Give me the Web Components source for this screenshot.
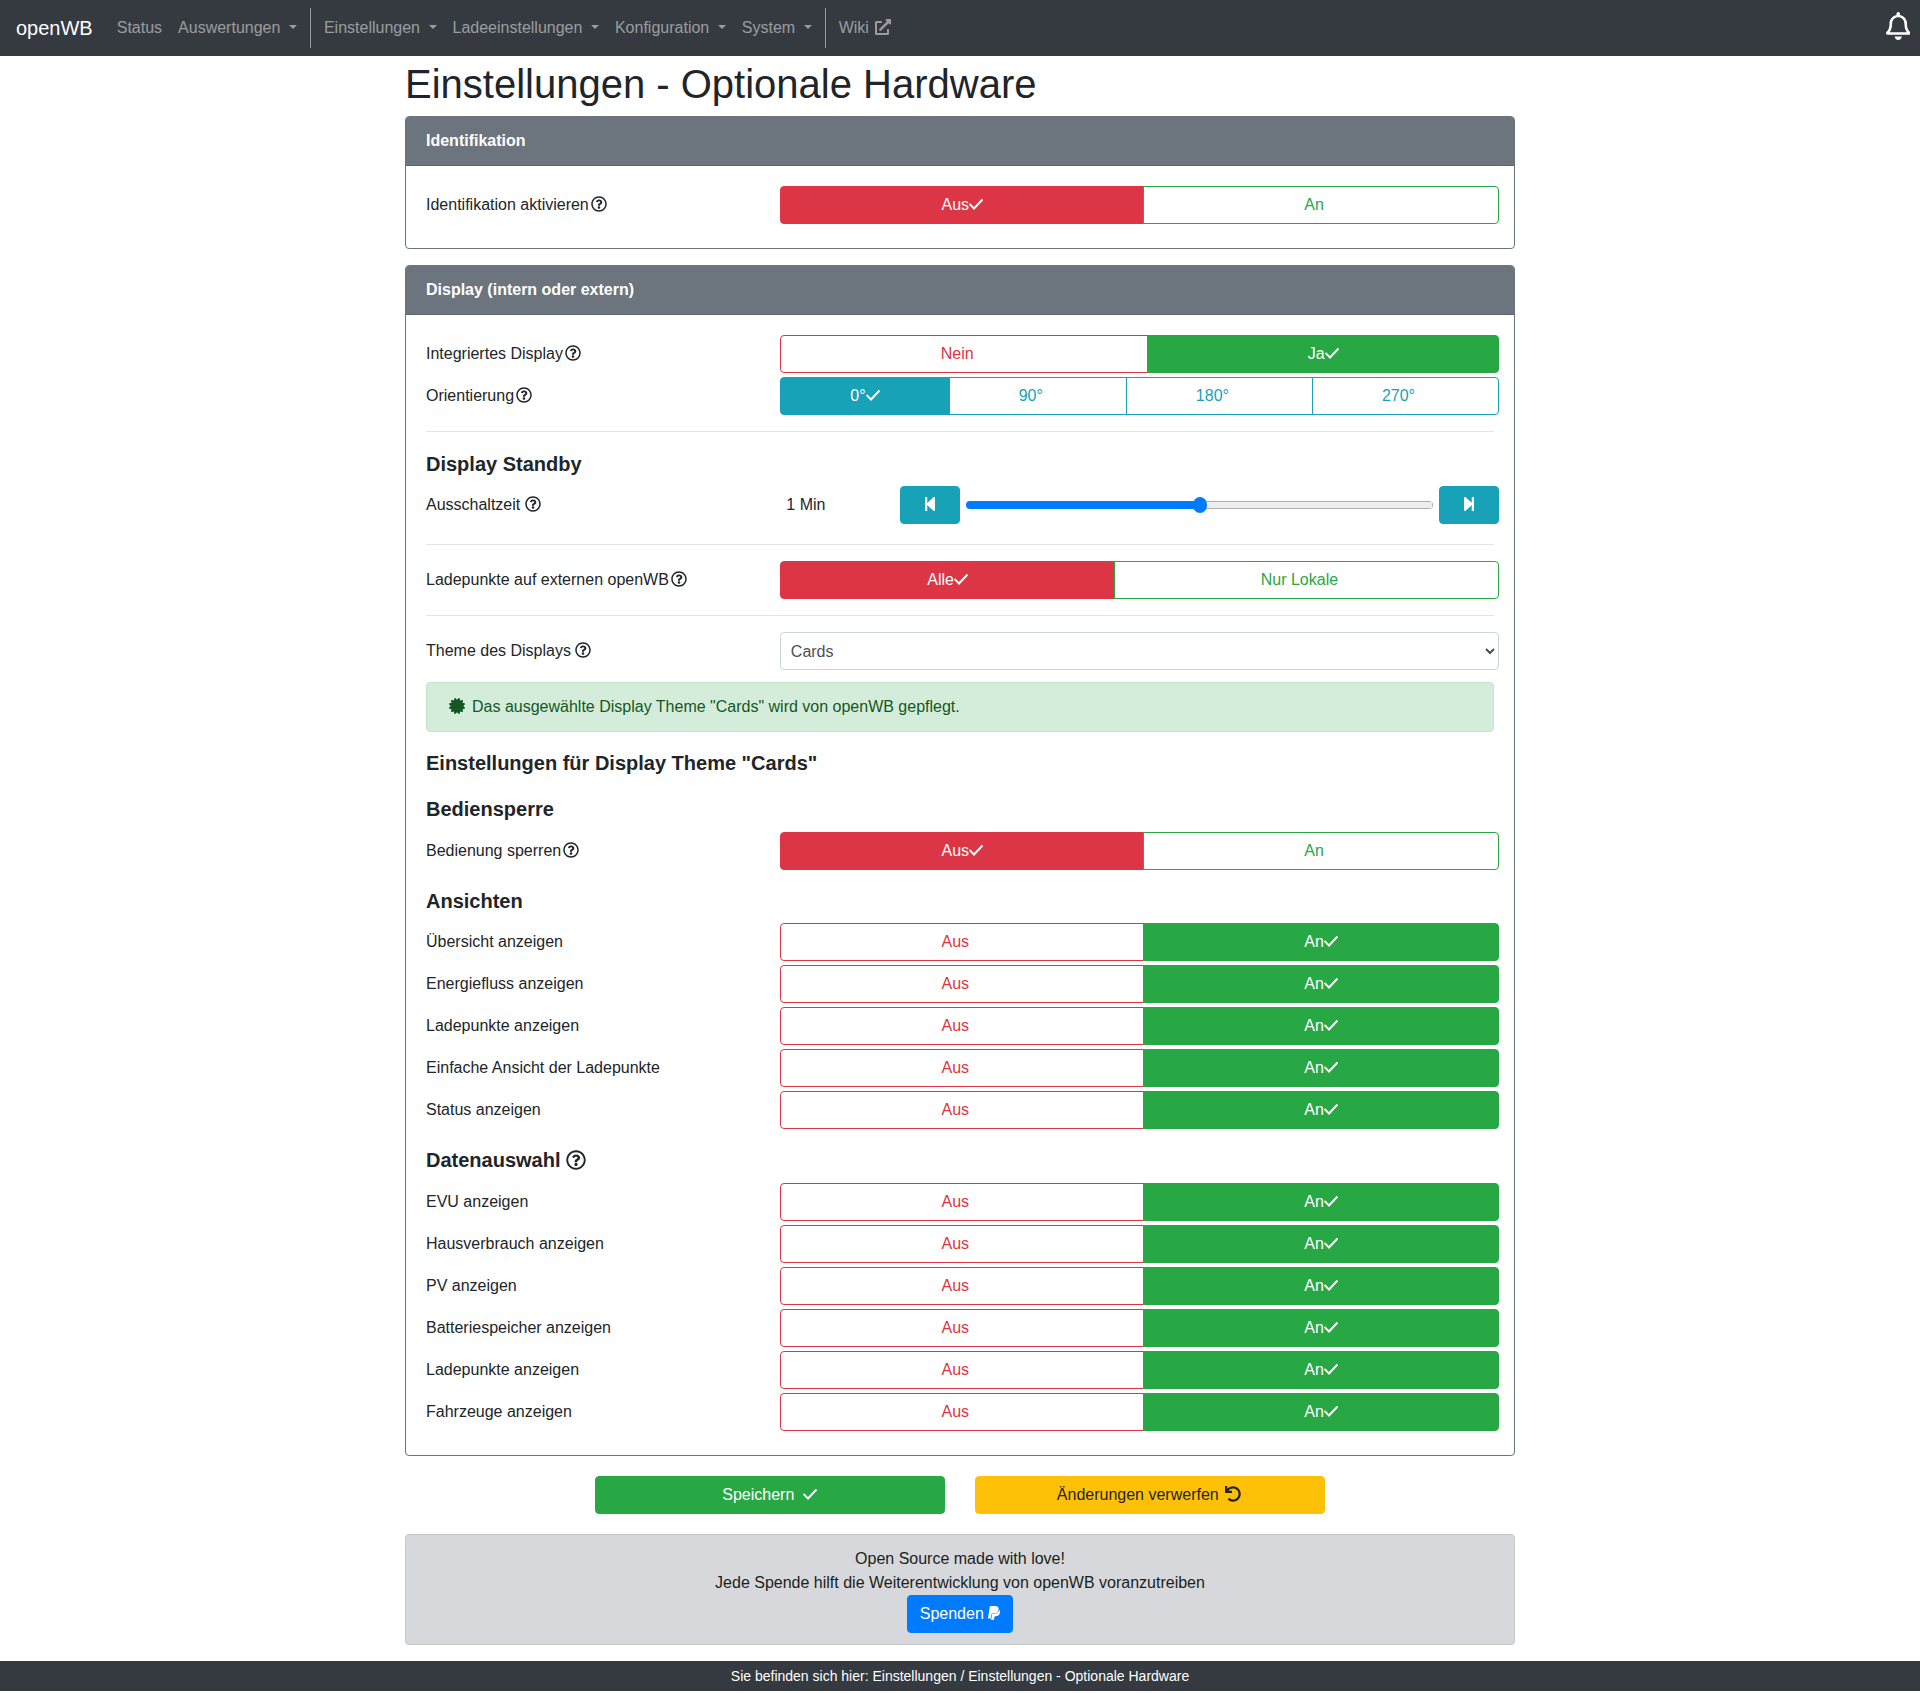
<!DOCTYPE html>
<html lang="de">
<head>
<meta charset="utf-8">
<title>openWB</title>
<style>
html,body{margin:0;padding:0;background:#fff}
body{font:16px/1.5 "Liberation Sans",Arial,sans-serif;color:#212529}
</style>
</head>
<body>
<ob-navbar>
  <ob-nav-item>Status</ob-nav-item>
  <ob-nav-item dropdown>Auswertungen</ob-nav-item>
  <ob-nav-divider></ob-nav-divider>
  <ob-nav-item dropdown>Einstellungen</ob-nav-item>
  <ob-nav-item dropdown>Ladeeinstellungen</ob-nav-item>
  <ob-nav-item dropdown>Konfiguration</ob-nav-item>
  <ob-nav-item dropdown>System</ob-nav-item>
  <ob-nav-divider></ob-nav-divider>
  <ob-nav-item external>Wiki</ob-nav-item>
</ob-navbar>

<ob-container>
  <ob-title>Einstellungen - Optionale Hardware</ob-title>

  <ob-card header="Identifikation">
    <ob-row><ob-label slot="label" help="tight">Identifikation aktivieren</ob-label>
      <ob-btn-group><ob-btn color="danger" active>Aus</ob-btn><ob-btn color="success">An</ob-btn></ob-btn-group></ob-row>
  </ob-card>

  <ob-card header="Display (intern oder extern)">
    <ob-row><ob-label slot="label" help="tight">Integriertes Display</ob-label>
      <ob-btn-group><ob-btn color="danger">Nein</ob-btn><ob-btn color="success" active>Ja</ob-btn></ob-btn-group></ob-row>
    <ob-row><ob-label slot="label" help="tight">Orientierung</ob-label>
      <ob-btn-group><ob-btn color="info" active>0°</ob-btn><ob-btn color="info">90°</ob-btn><ob-btn color="info">180°</ob-btn><ob-btn color="info">270°</ob-btn></ob-btn-group></ob-row>
    <ob-rule></ob-rule>
    <ob-heading style="margin-top:20px;margin-bottom:10px">Display Standby</ob-heading>
    <ob-row><ob-label slot="label" help="space">Ausschaltzeit</ob-label>
      <ob-slider value="50">1 Min</ob-slider></ob-row>
    <ob-rule style="margin-top:20px"></ob-rule>
    <ob-row><ob-label slot="label" help="tight">Ladepunkte auf externen openWB</ob-label>
      <ob-btn-group><ob-btn color="danger" active>Alle</ob-btn><ob-btn color="success">Nur Lokale</ob-btn></ob-btn-group></ob-row>
    <ob-rule></ob-rule>
    <ob-row style="margin-bottom:12px"><ob-label slot="label" help="space">Theme des Displays</ob-label>
      <ob-select value="Cards"></ob-select></ob-row>
    <ob-alert>Das ausgewählte Display Theme "Cards" wird von openWB gepflegt.</ob-alert>
    <ob-heading style="margin-top:19px;margin-bottom:22px">Einstellungen für Display Theme "Cards"</ob-heading>
    <ob-heading style="margin-bottom:11px">Bediensperre</ob-heading>
    <ob-row><ob-label slot="label" help="tight">Bedienung sperren</ob-label>
      <ob-btn-group><ob-btn color="danger" active>Aus</ob-btn><ob-btn color="success">An</ob-btn></ob-btn-group></ob-row>
    <ob-heading style="margin-top:19px;margin-bottom:10px">Ansichten</ob-heading>
    <ob-onoff>Übersicht anzeigen</ob-onoff>
    <ob-onoff>Energiefluss anzeigen</ob-onoff>
    <ob-onoff>Ladepunkte anzeigen</ob-onoff>
    <ob-onoff>Einfache Ansicht der Ladepunkte</ob-onoff>
    <ob-onoff>Status anzeigen</ob-onoff>
    <ob-heading help style="margin-top:19px;margin-bottom:11px">Datenauswahl</ob-heading>
    <ob-onoff>EVU anzeigen</ob-onoff>
    <ob-onoff>Hausverbrauch anzeigen</ob-onoff>
    <ob-onoff>PV anzeigen</ob-onoff>
    <ob-onoff>Batteriespeicher anzeigen</ob-onoff>
    <ob-onoff>Ladepunkte anzeigen</ob-onoff>
    <ob-onoff>Fahrzeuge anzeigen</ob-onoff>
  </ob-card>

  <ob-actions>
    <ob-action color="success" icon="check">Speichern</ob-action>
    <ob-action color="warning" icon="undo">Änderungen verwerfen</ob-action>
  </ob-actions>

  <ob-donate>
    <div>Open Source made with love!</div>
    <div>Jede Spende hilft die Weiterentwicklung von openWB voranzutreiben</div>
  </ob-donate>
</ob-container>

<ob-footer>Sie befinden sich hier: Einstellungen / Einstellungen - Optionale Hardware</ob-footer>

<script>
const ICONS = {
  help:[512,'<path d="M256 8C119 8 8 119.1 8 256c0 137 111 248 248 248s248-111 248-248C504 119.1 393 8 256 8zm0 448c-110.5 0-200-89.5-200-200 0-110.4 89.5-200 200-200 110.5 0 200 89.6 200 200 0 110.5-89.5 200-200 200zm107.2-255.2c0 67.1-72.4 68.1-72.4 92.9V300c0 6.6-5.4 12-12 12h-45.6c-6.6 0-12-5.4-12-12v-8.7c0-35.7 27.1-50 47.6-61.4 17.5-9.8 28.3-16.5 28.3-29.5 0-17.2-21.9-28.6-39.7-28.6-23.1 0-33.8 11-48.8 29.9-4 5.1-11.4 6-16.6 2.1l-27.8-21.1c-5.1-3.9-6.3-11.1-2.7-16.4C184.8 131.5 214.9 112 261.8 112c49.1 0 101.4 38.3 101.4 88.8zM298 368c0 23.2-18.8 42-42 42s-42-18.8-42-42 18.8-42 42-42 42 18.8 42 42z"/>'],
  check:[448,'<path fill="none" stroke="currentColor" stroke-width="62" d="M16 256 L160 400 L432 112"/>'],
  bell:[448,'<path d="M439.39 362.29c-19.32-20.76-55.47-51.99-55.47-154.29 0-77.7-54.48-139.9-127.94-155.16V32c0-17.67-14.32-32-31.98-32s-31.98 14.33-31.98 32v20.84C118.56 68.1 64.08 130.3 64.08 208c0 102.3-36.15 133.53-55.47 154.29-6 6.45-8.66 14.16-8.61 21.71.11 16.4 12.98 32 32.1 32h383.8c19.12 0 32-15.6 32.1-32 .05-7.55-2.61-15.27-8.61-21.71zM67.53 368c21.22-27.97 44.42-74.33 44.53-159.42 0-.2-.06-.38-.06-.58 0-61.86 50.14-112 112-112s112 50.14 112 112c0 .2-.06.38-.06.58.11 85.1 23.31 131.46 44.53 159.42H67.53zM224 512c35.32 0 63.97-28.65 63.97-64H160.03c0 35.35 28.65 64 63.97 64z"/>'],
  certificate:[512,'<path d="M458.622 255.92l45.985-45.005c13.708-12.977 7.316-36.039-10.664-40.339l-62.65-15.99 17.661-62.015c4.991-17.838-11.829-34.663-29.661-29.671l-61.994 17.667-15.984-62.671C337.085.197 313.765-6.276 300.99 7.228L256 53.57 211.011 7.229c-12.63-13.351-36.047-7.234-40.325 10.668l-15.984 62.671-61.995-17.667C74.87 57.907 58.056 74.738 63.046 92.572l17.661 62.015-62.65 15.99C.069 174.878-6.31 197.944 7.392 210.915l45.985 45.005-45.985 45.004c-13.708 12.977-7.316 36.039 10.664 40.339l62.65 15.99-17.661 62.015c-4.991 17.838 11.829 34.663 29.661 29.671l61.994-17.667 15.984 62.671c4.439 18.575 27.696 24.018 40.325 10.668L256 458.61l44.989 46.001c12.5 13.488 35.987 7.486 40.325-10.668l15.984-62.671 61.994 17.667c17.831 4.992 34.653-11.833 29.661-29.671l-17.661-62.015 62.65-15.99c17.981-4.3 24.372-27.362 10.664-40.339l-45.984-45.004z"/>'],
  back:[448,'<path d="M64 468V44c0-6.6 5.4-12 12-12h48c6.6 0 12 5.4 12 12v176.4l195.5-181C352.1 22.3 384 36.6 384 64v384c0 27.4-31.9 41.7-52.5 24.6L136 292.7V468c0 6.6-5.4 12-12 12H76c-6.6 0-12-5.4-12-12z"/>'],
  forward:[448,'<path d="M384 44v424c0 6.6-5.4 12-12 12h-48c-6.6 0-12-5.4-12-12V291.6l-195.5 181C95.9 489.7 64 475.4 64 448V64c0-27.4 31.9-41.7 52.5-24.6L312 219.3V44c0-6.6 5.4-12 12-12h48c6.6 0 12 5.4 12 12z"/>'],
  undo:[512,'<path d="M212.333 224.333H12c-6.627 0-12-5.373-12-12V12C0 5.373 5.373 0 12 0h48c6.627 0 12 5.373 12 12v78.112C117.773 39.279 184.26 7.47 258.175 8.007c136.906.994 246.448 111.623 246.157 248.532C504.041 393.258 393.12 504 256.333 504c-64.089 0-122.496-24.313-166.51-64.215-5.099-4.622-5.334-12.554-.467-17.42l33.967-33.967c4.474-4.474 11.662-4.717 16.401-.525C170.76 415.336 211.58 432 256.333 432c97.268 0 176-78.716 176-176 0-97.267-78.716-176-176-176-58.496 0-110.28 28.476-142.274 72.333h98.274c6.627 0 12 5.373 12 12v48c0 6.627-5.373 12-12 12z"/>'],
  paypal:[384,'<path d="M111.4 295.9c-3.5 19.2-17.4 108.7-21.5 134-.3 1.8-1 2.5-3 2.5H12.3c-7.6 0-13.1-6.6-12.1-13.9L58.8 46.6C60.3 37 68.8 29.7 78.7 29.7c152.3 0 165.1-3.7 204 11.4 60.1 23.3 65.6 79.5 44 140.3-21.5 62.6-72.5 89.5-140.1 90.3-43.4.7-69.5-7-75.2 24.2zM357.1 152c-1.8-1.3-2.5-1.8-3 1.3-2 11.4-5.1 22.5-8.8 33.6-39.9 113.8-150.5 103.9-204.5 103.9-6.1 0-10.1 3.3-10.9 9.4-22.6 140.4-27.1 169.7-27.1 169.7-1 7.1 3.5 12.9 10.6 12.9h63.5c8.6 0 15.7-6.3 17.4-14.9.7-5.4-1.1 6.1 14.4-91.3 4.6-22 14.3-19.7 29.3-19.7 71 0 126.4-28.8 142.9-112.3 6.5-34.8 4.6-71.4-23.8-92.6z"/>'],
  external:[512,'<path d="M432 320h-32a16 16 0 0 0-16 16v112H64V128h144a16 16 0 0 0 16-16V80a16 16 0 0 0-16-16H48A48 48 0 0 0 0 112v352a48 48 0 0 0 48 48h352a48 48 0 0 0 48-48V336a16 16 0 0 0-16-16zM488 0H360c-21.37 0-32.05 25.91-17 41l35.73 35.73L135 320.37a24 24 0 0 0 0 34L157.67 377a24 24 0 0 0 34 0L435.28 133.32 471 169c15 15 41 4.5 41-17V24a24 24 0 0 0-24-24z"/>']
};
const define=(tag,html,init)=>{
  const t=document.createElement('template');t.innerHTML=html;
  customElements.define(tag,class extends HTMLElement{
    constructor(){super();this.attachShadow({mode:'open'}).appendChild(t.content.cloneNode(true));}
    connectedCallback(){if(init)init.call(this,this.shadowRoot);}
  });
};
define('ob-icon',`<style>:host{display:inline-block;height:1em;vertical-align:-.125em;line-height:0}svg{display:block;height:1em;fill:currentColor}</style><svg aria-hidden="true"></svg>`,function(r){
  const ic=ICONS[this.getAttribute('name')];const s=r.querySelector('svg');
  s.setAttribute('viewBox',`0 0 ${ic[0]} 512`);s.style.width=(ic[0]/512)+'em';s.innerHTML=ic[1];
});
define('ob-navbar',`<style>
:host{display:flex;align-items:center;height:56px;box-sizing:border-box;padding:8px 16px;background:#343a40}
.brand{font-size:20px;line-height:30px;color:#fff;margin-right:16px}
.bell{margin:-4px -6px 0 auto;font-size:28px;color:#fff;display:flex}
</style><span class="brand">openWB</span><slot></slot><span class="bell"><ob-icon name="bell"></ob-icon></span>`);
define('ob-nav-item',`<style>
:host{display:block;padding:8px;line-height:24px;color:rgba(255,255,255,.5);white-space:pre}
.caret{display:none;width:0;height:0;margin-left:.255em;vertical-align:.255em;border-top:.3em solid;border-left:.3em solid transparent;border-right:.3em solid transparent}
:host([dropdown]) .caret{display:inline-block}
.ext{display:none;margin-left:2px}
:host([external]) .ext{display:inline-block}
.sp{display:none}
:host([dropdown]) .sp,:host([external]) .sp{display:inline}
</style><slot></slot><span class="sp"> </span><span class="caret"></span><span class="ext"><ob-icon name="external"></ob-icon></span>`);
define('ob-nav-divider',`<style>:host{display:block;width:1px;height:40px;margin:0 4.5px 0 5.5px;background:rgba(255,255,255,.5)}</style>`);
define('ob-container',`<style>:host{display:block;width:1110px;margin:0 auto}</style><slot></slot>`);
define('ob-title',`<style>:host{display:block;font-size:40px;line-height:48px;padding-top:4px;margin-bottom:8px;color:#212529}</style><slot></slot>`);
define('ob-card',`<style>
:host{display:block;border:1px solid #6c757d;border-radius:4px;margin-bottom:16px;background:#fff}
.h{background:#6c757d;color:#fff;font-weight:700;line-height:24px;padding:12px 20px;border-bottom:1px solid rgba(0,0,0,.125);border-radius:3px 3px 0 0}
.b{padding:20px}
</style><div class="h"></div><div class="b"><slot></slot></div>`,function(r){r.querySelector('.h').textContent=this.getAttribute('header')});
define('ob-row',`<style>
:host{display:grid;grid-template-columns:4fr 8fr;margin:0 -5px 4px}
.l{padding:7px 5px}
</style><div class="l"><slot name="label"></slot></div><div><slot></slot></div>`);
define('ob-label',`<style>.i{margin-left:2px}:host([help=space]) .i{margin-left:0}.s{display:none}:host([help=space]) .s{display:inline}</style><slot></slot><span class="s"> </span><ob-icon class="i" name="help"></ob-icon>`);
define('ob-btn-group',`<style>:host{display:flex}</style><slot></slot>`);
define('ob-btn',`<style>
:host{display:block;flex:1 1 auto;margin-left:-1px;--c:#6c757d}
:host(:first-child){margin-left:0}
:host([color=danger]){--c:#dc3545}:host([color=success]){--c:#28a745}:host([color=info]){--c:#17a2b8}
button{display:block;width:100%;height:38px;box-sizing:border-box;padding:6px 12px;font:inherit;line-height:24px;color:var(--c);background:#fff;border:1px solid var(--c);border-radius:0;white-space:nowrap}
:host(:first-child) button{border-radius:4px 0 0 4px}
:host(:last-child) button{border-radius:0 4px 4px 0}
:host([active]) button{background:var(--c);color:#fff}
.t{display:inline-block;position:relative;transform:translateX(-7px)}
.k{display:none;position:absolute;left:100%;top:0;line-height:24px}
:host([active]) .k{display:block}
</style><button type="button"><span class="t"><slot></slot><span class="k"><ob-icon name="check"></ob-icon></span></span></button>`);
define('ob-onoff',`<style>:host{display:block}</style><ob-row><ob-plain slot="label"><slot></slot></ob-plain><ob-btn-group><ob-btn color="danger">Aus</ob-btn><ob-btn color="success" active>An</ob-btn></ob-btn-group></ob-row>`);
define('ob-plain',`<style>:host{display:block}</style><slot></slot>`);
define('ob-rule',`<style>:host{display:block;border-top:1px solid rgba(0,0,0,.1);margin:16px 0 16px}</style>`);
define('ob-heading',`<style>:host{display:block;font-size:20px;font-weight:700;line-height:24px;color:#212529}
.h{display:none;font-weight:400}:host([help]) .h{display:inline}</style><slot></slot><span class="h"> <ob-icon name="help"></ob-icon></span>`);
define('ob-slider',`<style>
:host{display:grid;grid-template-columns:2fr 10fr;align-items:center;height:38px}
.v{padding-left:6px}
.c{display:flex;align-items:center}
button{flex:0 0 60px;height:38px;border:1px solid #17a2b8;background:#17a2b8;color:#fff;border-radius:4px;font:inherit;padding:0}
input{-webkit-appearance:none;appearance:none;flex:1 1 0;min-width:0;height:16px;margin:0 6px;background:transparent}
input::-webkit-slider-runnable-track{height:8px;border-radius:4px;background:linear-gradient(#007bff,#007bff) left/50% 100% no-repeat,linear-gradient(#eee,#eee) center/calc(100% - 2px) 6px no-repeat,#b0b0b0}
input::-webkit-slider-thumb{-webkit-appearance:none;appearance:none;width:14px;height:16px;border-radius:50%;background:#007bff;margin-top:-4px;border:0}
</style><div class="v"><slot></slot></div><div class="c"><button type="button" aria-label="zurück"><ob-icon name="back"></ob-icon></button><input type="range" min="0" max="100"><button type="button" aria-label="vor"><ob-icon name="forward"></ob-icon></button></div>`,function(r){r.querySelector('input').value=this.getAttribute('value')});
define('ob-select',`<style>
:host{display:block}
select{display:block;width:100%;height:38px;box-sizing:border-box;padding:6px 5.5px;font:inherit;line-height:24px;color:#495057;background:#fff;border:1px solid #ced4da;border-radius:4px}
</style><select></select>`,function(r){const s=r.querySelector('select');if(!s.options.length){const o=document.createElement('option');o.textContent=this.getAttribute('value');s.appendChild(o)}});
define('ob-alert',`<style>
:host{display:block;background:#d4edda;border:1px solid #c3e6cb;border-radius:4px;color:#155724;padding:12px 20px;line-height:24px;margin-bottom:16px}
ob-icon{margin:0 7.5px 0 1.5px}
</style><ob-icon name="certificate"></ob-icon><slot></slot>`);
define('ob-actions',`<style>:host{display:flex;justify-content:center;gap:30px;margin-top:20px;margin-bottom:20px}</style><slot></slot>`);
define('ob-action',`<style>
:host{display:block;width:350px;--bg:#28a745;--fg:#fff}
:host([color=warning]){--bg:#ffc107;--fg:#212529}
button{display:block;width:100%;height:38px;box-sizing:border-box;padding:6px 12px;font:inherit;line-height:24px;color:var(--fg);background:var(--bg);border:1px solid var(--bg);border-radius:4px}
.i{display:inline-block}
:host([icon=check]) .i{margin:0 1px 0 4px}
:host([icon=undo]) .i{margin:0 2px 0 2px}
</style><button type="button"><slot></slot> <span class="i"></span></button>`,function(r){
  r.querySelector('.i').innerHTML=`<ob-icon name="${this.getAttribute('icon')}"></ob-icon>`;
});
define('ob-donate',`<style>
:host{display:block;background:#d6d8db;border:1px solid #c6c8ca;border-radius:4px;color:#1b1e21;padding:12px 20px 11px;text-align:center;line-height:24px;margin-bottom:16px}
button{display:block;margin:0 auto;height:38px;box-sizing:border-box;padding:6px 12px;font:inherit;line-height:24px;color:#fff;background:#007bff;border:1px solid #007bff;border-radius:4px}
</style><slot></slot><button type="button">Spenden <ob-icon name="paypal"></ob-icon></button>`);
define('ob-footer',`<style>:host{display:block;height:30px;background:#343a40;color:#fff;text-align:center;font-size:14px;line-height:30px}</style><slot></slot>`);
</script>
</body>
</html>
